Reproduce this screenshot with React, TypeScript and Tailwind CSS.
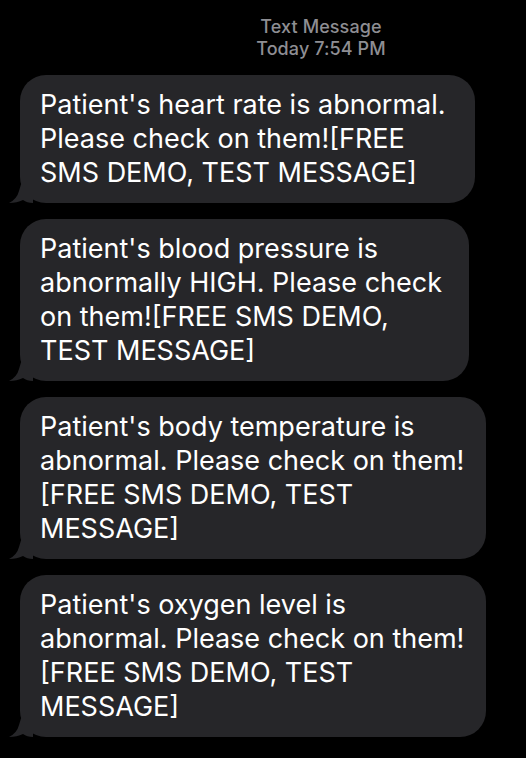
const messages = [
  {
    lines: ["Patient's heart rate is abnormal.", "Please check on them![FREE", "SMS DEMO, TEST MESSAGE]"],
    width: "w-[455px]",
  },
  {
    lines: ["Patient's blood pressure is", "abnormally HIGH. Please check", "on them![FREE SMS DEMO,", "TEST MESSAGE]"],
    width: "w-[449px]",
  },
  {
    lines: ["Patient's body temperature is", "abnormal. Please check on them!", "[FREE SMS DEMO, TEST", "MESSAGE]"],
    width: "w-[466px]",
  },
  {
    lines: ["Patient's oxygen level is", "abnormal. Please check on them!", "[FREE SMS DEMO, TEST", "MESSAGE]"],
    width: "w-[466px]",
  },
];

const Tail = () => (
  <svg
    className="absolute -left-[11px] bottom-0"
    width="24"
    height="22"
    viewBox="0 0 24 22"
  >
    <path d="M13 0 L24 0 L24 22 Q18 22 14 19 Q8 22 0 22 Q8 18 10 10 Z" fill="#262629" />
  </svg>
);

export default function App() {
  return (
    <div className="min-h-[758px] bg-black pt-[16px] font-['Inter','Liberation_Sans',sans-serif]">
      {/* header */}
      <div className="pl-[116px] text-center text-[18px] leading-[22px] font-medium tracking-[0.1px] text-[#8e8e93]">
        <div>Text Message</div>
        <div>Today 7:54 PM</div>
      </div>

      <div className="mt-[15px] flex flex-col gap-[16px] pl-[20px]">
        {messages.map((m, i) => (
          <div
            key={i}
            className={`relative ${m.width} rounded-[26px] bg-[#262629] px-[20px] py-[13px] text-[27px] leading-[34px] tracking-normal text-white`}
          >
            {m.lines.map((l, j) => (
              <div key={j} className="whitespace-nowrap">{l}</div>
            ))}
            <Tail />
          </div>
        ))}
      </div>
    </div>
  );
}
